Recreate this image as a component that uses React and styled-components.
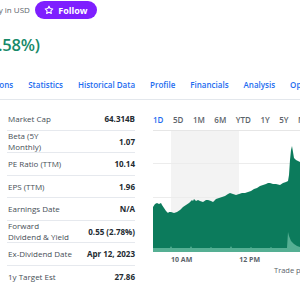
import React from "react";
import styled, { createGlobalStyle } from "styled-components";

const Global = createGlobalStyle`
  html, body { margin: 0; padding: 0; background: #fff; }
  body { font-family: "Open Sans", "Liberation Sans", sans-serif; }
`;

const Page = styled.div`
  width: 300px;
  height: 300px;
  overflow: hidden;
  position: relative;
  background: #fff;
`;

const Header = styled.header`
  display: flex;
  flex-direction: column;
  padding-top: 1px;
`;

const MetaRow = styled.div`
  display: flex;
  align-items: center;
  gap: 5px;
  height: 18px;
  margin-left: -31px;
  white-space: nowrap;
`;

const Meta = styled.span`
  font-size: 8px;
  color: #5b636a;
  line-height: 18px;
`;

const FollowButton = styled.button`
  display: flex;
  align-items: center;
  justify-content: center;
  gap: 4px;
  width: 62px;
  height: 18px;
  border: 0;
  border-radius: 9px;
  background: #7e1fff;
  color: #fff;
  font-family: "Open Sans", sans-serif;
  font-weight: 700;
  font-size: 9px;
  padding: 0;
  cursor: pointer;
`;

const PriceRow = styled.div`
  display: flex;
  height: 31px;
  align-items: center;
  margin-top: 10px;
  margin-left: -25.5px;
  white-space: nowrap;
`;

const Change = styled.span`
  font-size: 16.5px;
  font-weight: 600;
  color: #178a69;
  letter-spacing: -0.2px;
`;

const TabsWrap = styled.div`
  border-bottom: 1px solid #e3e7ec;
  height: 29px;
  margin-top: 10px;
  overflow: hidden;
`;

const TabRow = styled.nav`
  display: flex;
  gap: 15px;
  height: 29px;
  align-items: center;
  margin-left: -42px;
  white-space: nowrap;
`;

const Tab = styled.span`
  font-size: 8px;
  font-weight: 600;
  color: #1d6cf0;
`;

const Main = styled.main`
  display: flex;
  gap: 15px;
  padding-top: 8px;
`;

const Stats = styled.div`
  margin-left: 7px;
  width: 128px;
  flex: none;
  display: flex;
  flex-direction: column;
`;

const Row = styled.div`
  box-sizing: border-box;
  height: 22.5px;
  display: flex;
  align-items: center;
  justify-content: space-between;
  border-bottom: ${(p) => (p.$last ? "0" : "1px solid #e6e9ee")};
`;

const Label = styled.span`
  font-size: 8px;
  line-height: 11.5px;
  color: #464e56;
  padding-left: 1px;
`;

const Value = styled.span`
  font-size: 8px;
  font-weight: 700;
  color: #232a31;
  white-space: nowrap;
`;

const ChartPanel = styled.section`
  flex: 1;
  min-width: 0;
  overflow: hidden;
  display: flex;
  flex-direction: column;
`;

const Ranges = styled.div`
  display: flex;
  gap: 9.5px;
  height: 22px;
  align-items: center;
  padding-left: 3px;
  white-space: nowrap;
`;

const Range = styled.span`
  font-size: 8px;
  font-weight: 600;
  color: ${(p) => (p.$active ? "#1d6cf0" : "#5b636a")};
`;

const Plot = styled.div`
  height: 122px;
  width: 150px;
`;

const Axis = styled.div`
  display: flex;
  gap: 47px;
  height: 14px;
  align-items: center;
  padding-left: 21px;
`;

const AxisLabel = styled.span`
  font-size: 7px;
  font-weight: 700;
  color: #5b636a;
`;

const Note = styled.div`
  font-size: 7.5px;
  line-height: 8px;
  color: #5b636a;
  padding-left: 124px;
  white-space: nowrap;
`;

const StarIcon = () => (
  <svg width="10" height="10" viewBox="0 0 24 24" fill="none" stroke="#fff" strokeWidth="2.6" strokeLinejoin="round">
    <path d="M12 2.8l2.8 5.8 6.3.9-4.6 4.4 1.1 6.3L12 17.2l-5.6 3 1.1-6.3L2.9 9.5l6.3-.9z" />
  </svg>
);

const tabs = ["Conversations", "Statistics", "Historical Data", "Profile", "Financials", "Analysis", "Options", "Holders"];

const rows = [
  ["Market Cap", "64.314B"],
  [["Beta (5Y", "Monthly)"], "1.07"],
  ["PE Ratio (TTM)", "10.14"],
  ["EPS (TTM)", "1.96"],
  ["Earnings Date", "N/A"],
  [["Forward", "Dividend & Yield"], "0.55 (2.78%)"],
  ["Ex-Dividend Date", "Apr 12, 2023"],
  ["1y Target Est", "27.86"],
];

const ranges = ["1D", "5D", "1M", "6M", "YTD", "1Y", "5Y", "Max"];

const top = [
  [3, 77], [5, 74], [7, 73], [9, 74], [11, 73], [12, 75], [14, 78], [16, 81], [18, 83], [19, 82], [21, 82], [24, 83], [27, 82],
  [30, 80], [33, 77], [36, 75], [39, 73], [42, 70], [43, 71], [44, 69], [46, 71], [48, 70], [50, 71], [53, 72], [56, 70],
  [58, 70], [61, 71], [63, 72], [66, 69], [69, 68], [72, 67], [75, 66], [78, 64], [80, 63], [83, 64], [86, 65], [89, 64],
  [92, 63], [95, 63], [98, 62], [101, 61], [104, 59], [107, 58], [110, 56], [113, 55], [116, 54], [118, 53], [120, 53],
  [123, 54], [126, 54], [130, 55], [133, 53], [136, 52], [138, 51], [139, 45], [140, 30], [141, 20], [142, 16], [143, 22],
  [144, 28], [146, 30], [148, 31], [150, 32],
];

const areaPath = "M3 122 " + top.map(([x, y]) => `L${x} ${y}`).join(" ") + " L150 122 Z";

const volPath =
  "M3 122 L3 118 L20 118 L21 116 L22 118 L40 118 L41 116 L42 118 L60 118 L61 117 L62 118 L80 118 L81 116 L82 118 L100 118 L101 117 L102 118 L120 118 L121 117 L122 118 L137 118 L138 102 L139 106 L141 111 L144 114 L147 116 L150 117 L150 122 Z";

const Chart = () => (
  <svg width="150" height="122" viewBox="0 0 150 122">
    <rect x="21" y="0" width="68" height="122" fill="#f3f3f3" />
    <line x1="3" y1="0.5" x2="150" y2="0.5" stroke="#e6e6e6" />
    <line x1="3" y1="33.5" x2="150" y2="33.5" stroke="#ececec" />
    <line x1="3" y1="67.5" x2="150" y2="67.5" stroke="#ececec" />
    <path d={areaPath} fill="#0c7b5c" />
    <path d={volPath} fill="#63b89c" opacity="0.85" />
  </svg>
);

export default function App() {
  return (
    <>
      <Global />
      <Page>
        <Header>
          <MetaRow>
            <Meta>Currency in USD</Meta>
            <FollowButton>
              <StarIcon />
              Follow
            </FollowButton>
          </MetaRow>
          <PriceRow>
            <Change>(+2.58%)</Change>
          </PriceRow>
        </Header>
        <TabsWrap>
          <TabRow>
            {tabs.map((t) => (
              <Tab key={t}>{t}</Tab>
            ))}
          </TabRow>
        </TabsWrap>
        <Main>
          <Stats>
            {rows.map(([l, v], i) => (
              <Row key={i} $last={i === rows.length - 1}>
                <Label>
                  {Array.isArray(l) ? (
                    <>
                      {l[0]}
                      <br />
                      {l[1]}
                    </>
                  ) : (
                    l
                  )}
                </Label>
                <Value>{v}</Value>
              </Row>
            ))}
          </Stats>
          <ChartPanel>
            <Ranges>
              {ranges.map((r, i) => (
                <Range key={r} $active={i === 0}>
                  {r}
                </Range>
              ))}
            </Ranges>
            <Plot>
              <Chart />
            </Plot>
            <Axis>
              <AxisLabel>10 AM</AxisLabel>
              <AxisLabel>12 PM</AxisLabel>
            </Axis>
            <Note>Trade prices are not sourced from all markets</Note>
          </ChartPanel>
        </Main>
      </Page>
    </>
  );
}
